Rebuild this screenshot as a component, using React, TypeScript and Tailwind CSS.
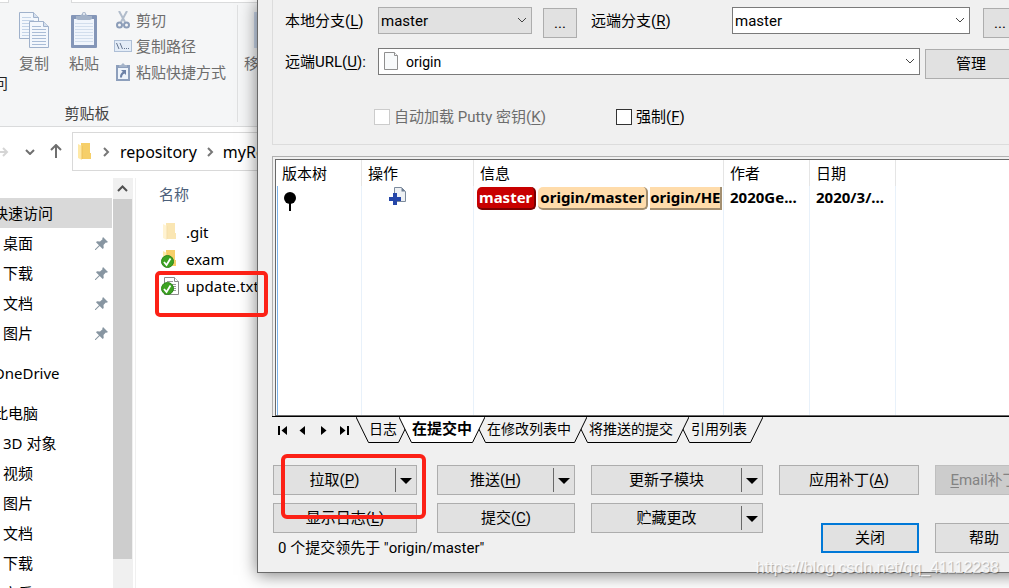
import React, { useState } from 'react';
import clsx from 'clsx';

interface NavItem {
  label: string;
  pinned?: boolean;
  root?: boolean;
  spaced?: boolean;
  selected?: boolean;
}

const NAV_ITEMS: NavItem[] = [
  { label: '快速访问', root: true, selected: true },
  { label: '桌面', pinned: true },
  { label: '下载', pinned: true },
  { label: '文档', pinned: true },
  { label: '图片', pinned: true },
  { label: 'OneDrive', root: true, spaced: true },
  { label: '此电脑', root: true, spaced: true },
  { label: '3D 对象' },
  { label: '视频' },
  { label: '图片' },
  { label: '文档' },
  { label: '下载' },
  { label: '音乐' },
];

const TABS = [
  { label: '日志', width: 'w-[29px]', layer: 'z-[5]' },
  { label: '在提交中', width: 'w-[60px]', layer: 'z-[4]' },
  { label: '在修改列表中', width: 'w-[88px]', layer: 'z-[3]' },
  { label: '将推送的提交', width: 'w-[88px]', layer: 'z-[2]' },
  { label: '引用列表', width: 'w-[60px]', layer: 'z-[1]' },
];

/* ---------- icons ---------- */

function CopyIcon() {
  return (
    <svg width="30" height="36" viewBox="0 0 30 36" fill="#f3f7fc" stroke="#9fb1cb">
      <path d="M.5.5h14l5 5v21H.5z" />
      <path d="M14.500.500v5h5" fill="#d5e0ee" />
      <path d="M3 5.500h9M3 8.500h12M3 11.500h8M3 14.500h8M3 17.500h8M3 20.500h8M3 23.500h8" stroke="#c3d3e7" />
      <path d="M10.500 9.500h14l5 5v21h-19z" />
      <path d="M24.500 9.500v5h5" fill="#d5e0ee" />
      <path d="M13 14.500h9M13 17.500h14M13 20.500h14M13 23.500h14M13 26.500h14M13 29.500h14M13 32.500h14" stroke="#a9bcd6" />
    </svg>
  );
}

function PasteIcon() {
  return (
    <svg width="26" height="37" viewBox="0 0 26 37">
      <rect y="4" width="26" height="33" rx="1" fill="#8496b8" />
      <path d="M3 8h20v26H3z" fill="#f0f5fc" />
      <path d="M4 12.500h18M4 15.500h18M4 18.500h18M4 21.500h18M4 24.500h18M4 27.500h18M4 30.500h18" stroke="#d2deed" />
      <path d="M5 8V5h4l2-2a2 2 0 0 1 4 0l2 2h4v3l-2 1H7z" fill="#a4b3c9" />
      <circle cx="13" cy="3" r="1" fill="#f3f6fa" />
    </svg>
  );
}

function ScissorsIcon() {
  return (
    <svg width="18" height="18" viewBox="0 0 18 18" fill="none" stroke="#8c9db8">
      <path d="M5 0l6 11M13 0L7 11" strokeWidth="2" stroke="#b1bccb" />
      <circle cx="5.500" cy="14" r="2.500" strokeWidth="2" />
      <circle cx="12.500" cy="14" r="2.500" strokeWidth="2" />
    </svg>
  );
}

function PathIcon() {
  return (
    <svg width="18" height="12" viewBox="0 0 18 12">
      <rect x=".5" y=".5" width="17" height="11" fill="#e3ecf7" stroke="#aebfd6" />
      <path d="M2.500 3l2.500 6M6 3l2.500 6" stroke="#64748f" fill="none" />
      <path d="M10 8h1v1h-1zM12 8h1v1h-1zM14 8h1v1h-1z" fill="#64748f" />
    </svg>
  );
}

function ShortcutIcon() {
  return (
    <svg width="14" height="18" viewBox="0 0 14 18">
      <rect y="2" width="14" height="16" fill="#8d9fbc" />
      <path d="M2 5h10v11H2z" fill="#eef4fb" />
      <path d="M3 4V2h2l2-2 2 2h2v2z" fill="#a4b3c9" />
      <path d="M5 7h5v5L8.500 10.500C6.500 11.500 6 13 6 14.500H4c0-2.500.500-4 2.800-5.700z" fill="#6d82a7" />
    </svg>
  );
}

function FolderIcon({ faded }: { faded?: boolean }) {
  return (
    <svg width="13" height="17" viewBox="0 0 13 17" className={clsx('shrink-0', faded && 'opacity-50')}>
      <path d="M3 0h9v10h1v6H3z" fill="#f6cf69" />
      <path d="M0 1l4 2v14l-4-2z" fill="#ffe9a6" />
      <path d="M4 3v13" stroke="#ecc05a" />
    </svg>
  );
}

function CheckBadge() {
  return (
    <svg width="13" height="13" viewBox="0 0 13 13" className="absolute bottom-0 left-0">
      <circle cx="6.500" cy="6.500" r="6" fill="#3da322" stroke="#2c861a" />
      <path d="M3 7l2.500 3L9.500 3.500" fill="none" stroke="#fff" strokeWidth="1.800" />
    </svg>
  );
}

function TextFileIcon() {
  return (
    <svg width="15" height="18" viewBox="0 0 15 18" fill="#fff" stroke="#8a8a8a" className="ml-[3px]">
      <path d="M.5.5h10l4 4v13H.5z" />
      <path d="M10.500.500v4h4" />
      <path d="M3 4.500h6M3 7.500h9M3 9.500h9M3 11.500h9M3 13.500h9" stroke="#9a9a9a" />
    </svg>
  );
}

function PinIcon() {
  return (
    <svg width="13" height="13" viewBox="0 0 13 13" fill="#8795a1">
      <path d="M8 0l5 5-1.500.700-.700-.200L8.500 8l.200 3-1 1-3-3L.700 13H0v-.700L4 8.300l-3-3 1-1 3 .200L7.500 2.200 7.300 1.500z" />
    </svg>
  );
}

function Chevron({ className, d = 'M1 1l4 4 4-4', w = 10, h = 6, width = 1 }: {
  className?: string;
  d?: string;
  w?: number;
  h?: number;
  width?: number;
}) {
  return (
    <svg width={w} height={h} viewBox={`0 0 ${w} ${h}`} fill="none" stroke="currentColor" strokeWidth={width} className={className}>
      <path d={d} />
    </svg>
  );
}

/* ---------- explorer window ---------- */

function Ribbon() {
  return (
    <div className="relative h-[127px] shrink-0 border-b border-[#dadbdc] bg-[#f5f6f7] text-[#6d6d6d]">
      <div className="flex h-[3px] justify-between">
        <div className="w-[9px] border-r border-b border-[#dadbdc] bg-white" />
        <div className="ml-[62px] flex-1 border-b border-l border-[#dadbdc] bg-white" />
      </div>
      <div className="flex h-[119px] pt-[2px]">
        <div className="flex w-2 shrink-0 justify-end pt-[67px] leading-[22px] text-[#222]">
          <span className="whitespace-nowrap">访问</span>
        </div>
        <div className="w-[229px] shrink-0">
          <div className="flex h-[97px] pt-[6px] pl-px">
            <button className="flex w-[50px] flex-col items-center pt-px">
              <CopyIcon />
              <span className="mt-1 leading-[22px]">复制</span>
            </button>
            <button className="flex w-[50px] flex-col items-center">
              <PasteIcon />
              <span className="mt-1 leading-[22px]">粘贴</span>
            </button>
            <div className="-mt-1 flex flex-col pl-[5px] leading-[26px] whitespace-nowrap">
              <button className="flex h-[26px] items-center gap-1"><ScissorsIcon />剪切</button>
              <button className="flex h-[26px] items-center gap-1"><PathIcon />复制路径</button>
              <button className="flex h-[26px] items-center gap-1">
                <span className="flex w-[18px] justify-center"><ShortcutIcon /></span>粘贴快捷方式
              </button>
            </div>
          </div>
          <div className="pr-[71px] text-center leading-[22px] text-[#444]">剪贴板</div>
        </div>
        <div className="border-l border-[#dfe0e1] pt-[7px] pl-[6px]">
          <div className="ml-[10px] h-9 w-6 bg-[#c9d6ea]" />
          <div className="mt-1 leading-[22px]">移动到</div>
        </div>
      </div>
    </div>
  );
}

function AddressBar() {
  return (
    <div className="flex h-[51px] shrink-0 items-start pt-[5px] text-[16px]">
      <div className="flex h-[39px] w-[72px] shrink-0 items-center text-[#6f6f6f]">
        <Chevron d="M0 5h7M3 1l4 4-4 4" w={9} h={10} width={2} className="text-[#d5d5d5]" />
        <Chevron width={2} className="ml-4" />
        <Chevron d="M6 14V1M1 6l5-5 5 5" w={12} h={15} width={2} className="ml-[15px]" />
      </div>
      <div className="flex h-[39px] flex-1 items-center border border-[#d9d9d9] pl-[5px] whitespace-nowrap">
        <FolderIcon />
        <Chevron d="M1 1l4 4-4 4" w={7} h={10} width={2} className="mr-[10px] ml-3 text-[#777]" />
        <span>repository</span>
        <Chevron d="M1 1l4 4-4 4" w={7} h={10} width={2} className="mr-[9px] ml-[10px] text-[#777]" />
        <span>myRepository</span>
      </div>
    </div>
  );
}

function NavPane() {
  return (
    <nav className="w-[113px] shrink-0 overflow-hidden pt-5">
      <ul>
        {NAV_ITEMS.map((item, i) => (
          <li
            key={i}
            className={clsx(
              'mr-px flex h-[30px] items-center justify-between pr-1 whitespace-nowrap',
              item.selected && 'bg-[#d9d9d9]',
              item.spaced && 'mt-[10px]'
            )}
          >
            <span className={item.root ? '-ml-[7px]' : 'ml-[3px]'}>{item.label}</span>
            {item.pinned && <PinIcon />}
          </li>
        ))}
      </ul>
    </nav>
  );
}

function Explorer() {
  return (
    <div className="flex h-full flex-col">
      <Ribbon />
      <AddressBar />
      <div className="flex min-h-0 flex-1">
        <NavPane />
        <div className="flex w-5 shrink-0 flex-col bg-[#f0f0f0]">
          <div className="flex h-[21px] items-center justify-center pr-px text-[#505050]">
            <Chevron d="M1 6l4.500-4.500L10 6" w={11} h={7} width={2} />
          </div>
          <div className="mr-px h-[360px] bg-[#cdcdcd]" />
        </div>
        <div className="ml-[2px] flex-1 border-l border-[#f0f0f0] pl-[25px]">
          <div className="-ml-[2px] h-10 leading-[32px] text-[#4c607a]">名称</div>
          <div className="flex h-[27px] items-center gap-2">
            <span className="flex w-[17px] justify-center"><FolderIcon faded /></span>
            <span>.git</span>
          </div>
          <div className="flex h-[27px] items-center gap-2">
            <span className="relative flex w-[17px] justify-center pb-px"><FolderIcon /><CheckBadge /></span>
            <span>exam</span>
          </div>
          <div className="flex h-[27px] items-center gap-2">
            <span className="relative w-[17px]"><TextFileIcon /><CheckBadge /></span>
            <span>update.txt</span>
          </div>
        </div>
      </div>
    </div>
  );
}

/* ---------- sync dialog ---------- */

function Key({ k }: { k: string }) {
  return <>(<u className="underline-offset-2">{k}</u>)</>;
}

function PushButton({ children, className, split, disabled }: {
  children: React.ReactNode;
  className?: string;
  split?: boolean;
  disabled?: boolean;
}) {
  return (
    <button
      disabled={disabled}
      className={clsx(
        'flex h-[30px] shrink-0 items-center border whitespace-nowrap',
        disabled ? 'border-[#bfbfbf] bg-[#cccccc] text-[#838383]' : 'bg-[#e1e1e1]',
        className
      )}
    >
      <span className="flex-1 text-center">{children}</span>
      {split && (
        <span className="flex h-6 w-[21px] items-center justify-center border-l border-[#696969] pt-px pr-px">
          <svg width="12" height="6" viewBox="0 0 12 6"><path d="M0 0h12L6 6z" /></svg>
        </span>
      )}
    </button>
  );
}

function Combo({ id, value, className, grey, icon }: {
  id: string;
  value: string;
  className?: string;
  grey?: boolean;
  icon?: React.ReactNode;
}) {
  return (
    <div className={clsx('relative h-[27px]', className)}>
      {icon && <span className="absolute top-1 left-[6px]">{icon}</span>}
      <select
        id={id}
        className={clsx(
          'h-full w-full appearance-none border leading-5 outline-none',
          grey ? 'border-[#adadad] bg-[#e1e1e1]' : 'border-[#7a7a7a] bg-white',
          icon ? 'pl-[27px] text-[14px]' : 'pl-[2px]'
        )}
      >
        <option>{value}</option>
      </select>
      <Chevron className="pointer-events-none absolute top-[10px] right-[5px] text-[#444]" />
    </div>
  );
}

function RemoteForm() {
  return (
    <div className="border-x border-b border-[#dcdcdc] pt-[7px] pr-[13px] pb-[19px] pl-3 whitespace-nowrap">
      <div className="flex h-[31px] items-start">
        <label htmlFor="local" className="w-[93px] shrink-0 leading-[29px]">本地分支<Key k="L" /></label>
        <Combo id="local" value="master" grey className="w-[154px] shrink-0" />
        <PushButton className="mt-px mr-[14px] ml-[11px] w-[34px] border-[#adadad]">...</PushButton>
        <label htmlFor="remote" className="w-[141px] shrink-0 leading-[29px]">远端分支<Key k="R" /></label>
        <Combo id="remote" value="master" className="flex-1" />
        <PushButton className="mt-px ml-[13px] w-[34px] border-[#adadad]">...</PushButton>
      </div>
      <div className="mt-[10px] flex h-[31px] items-start">
        <label htmlFor="url" className="w-[93px] shrink-0 leading-[29px]">远端URL<Key k="U" />:</label>
        <Combo
          id="url"
          value="origin"
          className="flex-1"
          icon={
            <svg width="14" height="18" viewBox="0 0 14 18" fill="#f8fafb" stroke="#8f8f8f">
              <path d="M.5.5h10l3 3v14H.5z" />
              <path d="M10.500.500v3h3" />
            </svg>
          }
        />
        <PushButton className="mt-px ml-[5px] w-[92px] border-[#adadad]">管理</PushButton>
      </div>
      <div className="mt-[30px] flex h-4 items-center pl-[89px]">
        <div className="flex w-[242px] items-center gap-1 text-[#6d6d6d]">
          <input id="putty" type="checkbox" disabled className="size-4 appearance-none border border-[#cccccc] bg-white" />
          <label htmlFor="putty">自动加载 Putty 密钥<Key k="K" /></label>
        </div>
        <div className="flex items-center gap-1">
          <input id="force" type="checkbox" className="size-4 appearance-none border border-[#333] bg-white" />
          <label htmlFor="force">强制<Key k="F" /></label>
        </div>
      </div>
    </div>
  );
}

const BADGE = 'h-[23px] shrink-0 border-r-2 border-b-2 px-[2px] leading-5';

function CommitTable() {
  const head = 'border-r border-[#e5e5e5] text-left font-normal';
  const cell = 'border-r border-[#e8f1fa] p-0 align-top';
  return (
    <div className="mt-[11px] h-[260px] border-t border-l border-[#b0b0b0] pt-[2px] pl-[2px]">
      <div className="h-full border-t border-b border-l border-[#696969] bg-white pl-px font-['Noto_Sans','Noto_Sans_CJK_SC',sans-serif]">
        <table className="h-full w-full table-fixed border-separate border-spacing-0 whitespace-nowrap">
          <colgroup>
            <col className="w-[85px]" />
            <col className="w-[112px]" />
            <col className="w-[250px]" />
            <col className="w-[86px]" />
            <col className="w-[86px]" />
            <col />
          </colgroup>
          <thead>
            <tr className="h-[26px]">
              <th className={clsx(head, 'pl-[5px]')}>版本树</th>
              <th className={clsx(head, 'pl-[6px]')}>操作</th>
              <th className={clsx(head, 'pl-[6px]')}>信息</th>
              <th className={clsx(head, 'pl-[6px]')}>作者</th>
              <th className={clsx(head, 'pl-[6px]')}>日期</th>
              <th />
            </tr>
          </thead>
          <tbody>
            <tr className="h-[26px] font-bold">
              <td className={clsx(cell, 'border-l border-l-[#7eb4ea]')}>
                <svg width="12" height="20" viewBox="0 0 12 20" className="mt-[6px] ml-[6px]">
                  <circle cx="6" cy="6" r="6" />
                  <path d="M6 10v9" stroke="#000" strokeWidth="2" />
                </svg>
              </td>
              <td className={cell}>
                <svg width="17" height="18" viewBox="0 0 17 18" className="mt-px ml-[27px]">
                  <path d="M5.500.500h7l4 4v10h-11z" fill="#eef1f4" stroke="#7c8a9c" />
                  <path d="M12.500.500v4h4z" fill="#6e7f93" />
                  <path d="M4 6h4v4h4v4H8v4H4v-4H0v-4h4z" fill="#2546a8" />
                </svg>
              </td>
              <td className={clsx(cell, 'overflow-hidden pr-px pl-[3px]')}>
                <div className="flex gap-[2px] overflow-hidden pt-px">
                  <span className={clsx(BADGE, 'rounded-[5px] border-[#7a0000] bg-[#c80000] text-white')}>master</span>
                  <span className={clsx(BADGE, 'rounded-[5px] border-[#a38f71] bg-[#ffdcab]')}>origin/master</span>
                  <span className="h-[23px] min-w-0 flex-1 overflow-hidden border-r-2 border-b-2 border-[#a38f71] bg-[#ffdcab] leading-5">
                    origin/HE
                  </span>
                </div>
              </td>
              <td className={clsx(cell, 'overflow-hidden pl-[6px] leading-[22px]')}>2020Ge...</td>
              <td className={clsx(cell, 'overflow-hidden pl-[6px] leading-[22px]')}>2020/3/...</td>
              <td />
            </tr>
            <tr>
              <td className={clsx(cell, 'border-l border-l-[#7eb4ea]')} />
              <td className={cell} />
              <td className={cell} />
              <td className={cell} />
              <td className={cell} />
              <td />
            </tr>
          </tbody>
        </table>
      </div>
    </div>
  );
}

function TabStrip() {
  const [active, setActive] = useState(1);
  return (
    <div className="flex h-[27px] border-t border-black text-[14px]">
      <div className="flex w-[84px] shrink-0 items-center gap-[11px] pl-[6px]">
        <button aria-label="first">
          <svg width="10" height="9" viewBox="0 0 10 9"><path d="M0 0h2v9H0zM9 0v9L3.500 4.500z" /></svg>
        </button>
        <button aria-label="previous">
          <svg width="8" height="9" viewBox="0 0 8 9"><path d="M6 0v9L.5 4.500z" /></svg>
        </button>
        <button aria-label="next">
          <svg width="10" height="9" viewBox="0 0 10 9"><path d="M3 0v9l5.500-4.500z" /></svg>
        </button>
        <button aria-label="last">
          <svg width="10" height="9" viewBox="0 0 10 9"><path d="M8 0h2v9H8zM1 0v9l5.500-4.500z" /></svg>
        </button>
      </div>
      {TABS.map((tab, i) => {
        const on = i === active;
        const fill = on ? '#ffffff' : '#f0f0f0';
        return (
          <button
            key={tab.label}
            onClick={() => setActive(i)}
            className={clsx('relative flex h-[26px]', i > 0 && '-ml-3', on ? 'z-10 text-[15px] font-bold' : tab.layer)}
          >
            <svg width="13" height="26" viewBox="0 0 13 26" className="shrink-0">
              <path d="M0 0l13 26V0z" fill={fill} />
              <path d="M0 0l12.500 25.500H13" stroke="#000" fill="none" />
            </svg>
            <span
              className={clsx(
                'h-[26px] border-b border-black text-left leading-[25px] whitespace-nowrap',
                tab.width,
                on ? 'bg-white' : 'bg-[#f0f0f0]',
                i > 1 && 'pl-px'
              )}
            >
              {tab.label}
            </span>
            <svg width="13" height="26" viewBox="0 0 13 26" className="shrink-0">
              <path d="M13 0L0 26V0z" fill={fill} />
              <path d="M13 0L.5 25.500H0" stroke="#000" fill="none" />
            </svg>
          </button>
        );
      })}
    </div>
  );
}

function DialogButtons() {
  return (
    <div className="mt-[22px] flex pb-[9px] pl-px">
      <div className="shrink-0">
        <div className="flex">
          <PushButton split className="mr-5 w-[144px] border-[#adadad]">拉取<Key k="P" /></PushButton>
          <PushButton split className="mr-4 w-[138px] border-[#adadad]">推送<Key k="H" /></PushButton>
          <PushButton split className="mr-4 w-[172px] border-[#adadad]">更新子模块</PushButton>
        </div>
        <div className="mt-2 flex">
          <PushButton className="mr-5 w-[144px] border-[#adadad]">显示日志<Key k="L" /></PushButton>
          <PushButton className="mr-4 w-[138px] border-[#adadad]">提交<Key k="C" /></PushButton>
          <PushButton split className="mr-4 w-[172px] border-[#adadad]">贮藏更改</PushButton>
        </div>
        <div className="pl-[5px] leading-[30px] whitespace-nowrap">0 个提交领先于 "origin/master"</div>
      </div>
      <div className="flex shrink-0 flex-col gap-7">
        <div className="flex gap-4">
          <PushButton className="w-[140px] border-[#adadad]">应用补丁<Key k="A" /></PushButton>
          <PushButton disabled className="w-[98px]"><u className="underline-offset-2">E</u>mail补丁</PushButton>
        </div>
        <div className="flex justify-end gap-4">
          <PushButton className="w-[98px] border-2 border-[#0078d7]">关闭</PushButton>
          <PushButton className="w-[98px] border-[#adadad]">帮助</PushButton>
        </div>
      </div>
    </div>
  );
}

export default function App() {
  return (
    <div className="relative h-screen overflow-hidden bg-white font-['Noto_Sans','Noto_Sans_CJK_SC',sans-serif] text-[15px] leading-5 text-black">
      <Explorer />

      {/* dialog window, runs past the right edge of the screen */}
      <div
        role="dialog"
        className="absolute top-0 left-[257px] -right-9 border-b border-l border-[#6a6a6a] bg-[#f0f0f0] pl-[14px] font-['Roboto','Noto_Sans_CJK_SC',sans-serif] shadow-[0_2px_16px_rgba(0,0,0,0.5)]"
      >
        <div className="pr-[14px]">
          <RemoteForm />
        </div>
        <CommitTable />
        <TabStrip />
        <DialogButtons />
      </div>

      {/* red highlight marks */}
      <div className="pointer-events-none absolute top-[271px] left-[155px] h-[46px] w-[113px] rounded-[5px] border-4 border-[#fc2116]" />
      <div className="pointer-events-none absolute top-[454px] left-[281px] h-[65px] w-[145px] rounded-[6px] border-4 border-[#fc2116]" />

      <div className="pointer-events-none absolute right-[10px] bottom-[10px] font-['Liberation_Sans',sans-serif] text-[16px] text-white/80 [text-shadow:1px_1px_1px_rgba(0,0,0,0.3)]">
        https://blog.csdn.net/qq_41112238
      </div>
    </div>
  );
}
